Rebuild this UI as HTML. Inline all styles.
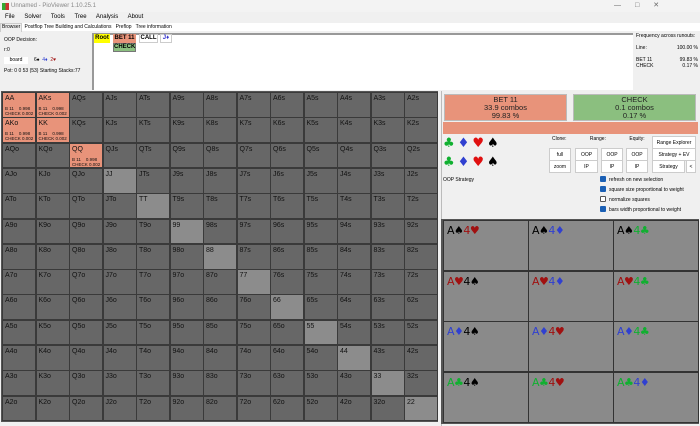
<!DOCTYPE html>
<html><head><style>
*{box-sizing:border-box;margin:0;padding:0}
body{width:700px;height:426px;background:#f0f0f0;font-family:"Liberation Sans",sans-serif;font-size:6px;color:#000;position:relative;overflow:hidden}
.abs{position:absolute}
.cell{position:absolute;background:#676767;border:1px solid #3a3a3a;font-size:7px;padding:2px 2px;color:#111}
.cell.p{background:#8c8c8c}
.cell.o{background:#e8937a}
.cell small{position:absolute;left:2px;font-size:4.5px;line-height:5px}
.btn{position:absolute;background:#fff;border:1px solid #ccc;font-size:5px;text-align:center;line-height:12px;height:13px}
.cb{position:absolute;font-size:5px;line-height:7px}
.cb i{display:inline-block;width:6px;height:6px;background:#1a5fb4;vertical-align:-1px;margin-right:3px;border-radius:1px}
.cb i.e{background:#fff;border:1px solid #555}
.card{position:absolute;background:#8a8a8a;border:1px solid #333;font-size:11px;padding:3px 3px;font-family:"DejaVu Sans",sans-serif;letter-spacing:-0.5px}
.k{color:#000}.r{color:#a01010}.b{color:#3040d0}.g{color:#10b030}
.tn{position:absolute;font-size:6px;text-align:center;line-height:8px;height:9px;font-weight:bold}
.st{position:absolute;font-size:13px;letter-spacing:3px;font-family:"DejaVu Sans",sans-serif}
</style></head><body>
<div class="abs" style="left:0;top:0;width:700px;height:12px;background:#f3f3f3"></div>
<div class="abs" style="left:2px;top:3px;width:7px;height:7px;background:linear-gradient(90deg,#3a3 50%,#c33 50%)"></div>
<div class="abs" style="left:11px;top:3px;font-size:6px;color:#888">Unnamed - PioViewer 1.10.25.1</div>
<div class="abs" style="left:614px;top:1px;font-size:7px;color:#666;letter-spacing:14px">—□✕</div>
<div class="abs" style="left:5px;top:14px;font-size:6px;word-spacing:8px">File Solver Tools Tree Analysis About</div>
<div class="abs" style="left:0;top:23px;width:700px;height:8px;background:#fff"></div>
<div class="abs" style="left:0;top:23px;width:22px;height:9px;background:#f0f0f0;border:1px solid #ccc;border-bottom:none"></div>
<div class="abs" style="left:2px;top:24px;font-size:5px">Browser &nbsp; Postflop Tree Building and Calculations &nbsp; Preflop &nbsp; Tree information</div>
<div class="abs" style="left:4px;top:37px;font-size:5px">OOP Decision:</div>
<div class="abs" style="left:4px;top:47px;font-size:5px">r:0</div>
<div class="abs" style="left:4px;top:57px;width:24px;height:7px;background:#fff;font-size:5px;text-align:center">board</div>
<div class="abs" style="left:34px;top:57px;font-size:5px"><span class="k">6♠</span> &nbsp;<span class="b">4♦</span> &nbsp;<span class="r">2♥</span></div>
<div class="abs" style="left:4px;top:68px;font-size:5px">Pot: 0 0 53 (53) Starting Stacks:77</div>
<div class="abs" style="left:92px;top:33px;width:541px;height:57px;background:#fff;border-left:2px solid #999;border-top:2px solid #999"></div>
<div class="tn" style="left:94px;top:34px;width:16px;background:#ff0">Root</div>
<div class="tn" style="left:113px;top:34px;width:23px;background:#e8937a">BET 11</div>
<div class="tn" style="left:139px;top:34px;width:19px;border:1px solid #ccc;line-height:7px">CALL</div>
<div class="tn" style="left:160px;top:34px;width:12px;border:1px solid #ccc;color:#33c;line-height:7px">J♦</div>
<div class="tn" style="left:113px;top:43px;width:23px;background:#8bbf7f;border:1px solid #777;line-height:7px">CHECK</div>
<div class="abs" style="left:636px;top:33px;font-size:5px;line-height:6px;width:62px">Frequency across runouts:<br><br>Line:<span style="float:right">100.00 %</span><br><br>BET 11<span style="float:right">99.83 %</span><br>CHECK<span style="float:right">0.17 %</span></div>
<div class="abs" style="left:1px;top:91px;width:437px;height:331px;background:#555"></div>
<div id="g"></div>
<div class="abs" style="left:441px;top:91px;width:259px;height:335px;background:#f0f0f0;border-left:1px solid #bbb"></div>
<div class="abs" style="left:444px;top:94px;width:123px;height:27px;background:#e8937a;border:1px solid #bbb;text-align:center;font-size:7.5px;line-height:8px;padding-top:1px;color:#222">BET 11<br>33.9 combos<br>99.83 %</div>
<div class="abs" style="left:573px;top:94px;width:123px;height:27px;background:#8bbf7f;border:1px solid #bbb;text-align:center;font-size:7.5px;line-height:8px;padding-top:1px;color:#222">CHECK<br>0.1 combos<br>0.17 %</div>
<div class="abs" style="left:443px;top:122px;width:255px;height:12px;background:#e8937a"></div>
<div class="st" style="left:443px;top:136px"><span class="g">♣</span><span class="b">♦</span><span style="color:#e01010">♥</span><span class="k">♠</span></div>
<div class="st" style="left:443px;top:155px"><span class="g">♣</span><span class="b">♦</span><span style="color:#e01010">♥</span><span class="k">♠</span></div>
<div class="abs" style="left:552px;top:136px;font-size:5px;word-spacing:22px">Clone: Range: Equity: EV:</div>
<div class="btn" style="left:549px;top:148px;width:22px">full</div>
<div class="btn" style="left:549px;top:160px;width:22px">zoom</div>
<div class="btn" style="left:575px;top:148px;width:23px">OOP</div>
<div class="btn" style="left:575px;top:160px;width:23px">IP</div>
<div class="btn" style="left:601px;top:148px;width:22px">OOP</div>
<div class="btn" style="left:601px;top:160px;width:22px">IP</div>
<div class="btn" style="left:626px;top:148px;width:22px">OOP</div>
<div class="btn" style="left:626px;top:160px;width:22px">IP</div>
<div class="btn" style="left:652px;top:136px;width:44px">Range Explorer</div>
<div class="btn" style="left:652px;top:148px;width:44px">Strategy + EV</div>
<div class="btn" style="left:652px;top:160px;width:33px">Strategy</div>
<div class="btn" style="left:686px;top:160px;width:10px">&lt;</div>
<div class="abs" style="left:443px;top:177px;font-size:5px">OOP Strategy</div>
<div class="cb" style="left:600px;top:176px"><i></i>refresh on new selection</div>
<div class="cb" style="left:600px;top:186px"><i></i>square size proportional to weight</div>
<div class="cb" style="left:600px;top:196px"><i class="e"></i>normalize squares</div>
<div class="cb" style="left:600px;top:206px"><i></i>bars width proportional to weight</div>
<div class="abs" style="left:441px;top:219px;width:258px;height:205px;background:#555"></div>
<div id="c"></div>
<script>
var R="AKQJT98765432",h="";
var W=33.5,H=25.3;
for(var i=0;i<13;i++)for(var j=0;j<13;j++){
var n=i==j?R[i]+R[j]:i<j?R[i]+R[j]+"s":R[j]+R[i]+"o";
var cls="cell"+(i==j?" p":"");var ex="";
if((i<2&&j<2)||(i==2&&j==2)){cls="cell o";ex='<small style="top:13px">B 11&nbsp;&nbsp;&nbsp;&nbsp;0.998<br>CHECK 0.002</small>';}
h+='<div class="'+cls+'" style="left:'+(2+j*W)+'px;top:'+(92+i*H)+'px;width:'+(W+0.5)+'px;height:'+(H+0.5)+'px">'+n+ex+'</div>';}
document.getElementById("g").innerHTML=h;
var S={s:'<span class="k">♠</span>',h:'<span class="r">♥</span>',d:'<span class="b">♦</span>',c:'<span class="g">♣</span>'};
var C={s:"k",h:"r",d:"b",c:"g"};
var rows=[["s","h"],["s","d"],["s","c"],["h","s"],["h","d"],["h","c"],["d","s"],["d","h"],["d","c"],["c","s"],["c","h"],["c","d"]];
h="";
for(var k=0;k<12;k++){var a=rows[k][0],b=rows[k][1];var r=Math.floor(k/3),c=k%3;
h+='<div class="card" style="left:'+(443+c*85)+'px;top:'+(220+r*50.5)+'px;width:86px;height:51px"><span class="'+C[a]+'">A</span>'+S[a]+'<span class="'+C[b]+'">4</span>'+S[b]+'</div>';}
document.getElementById("c").innerHTML=h;
</script>
</body></html>
